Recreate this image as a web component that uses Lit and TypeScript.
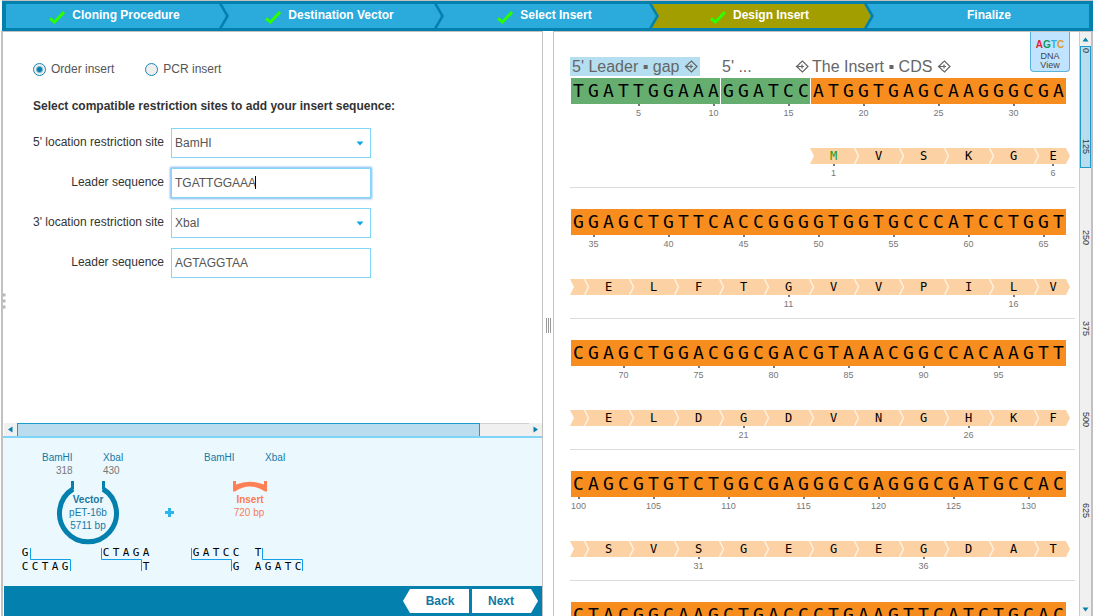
import { LitElement, html, svg, css, nothing } from "lit";
import { customElement, state } from "lit/decorators.js";
import { classMap } from "lit/directives/class-map.js";

interface Segment { kind: "leader" | "insert"; bases: string }
interface Codon { letter: string; span: number; start?: boolean }
interface SequenceRow { first: number; segments: Segment[]; offset: number; firstAmino: number; aminos: Codon[] }

const codons = (letters: string): Codon[] => [
  { letter: "", span: 1 },
  ...[...letters].map((letter, i) => ({ letter, span: i === letters.length - 1 ? 2 : 3 })),
];

const ROWS: SequenceRow[] = [
  {
    first: 1,
    segments: [
      { kind: "leader", bases: "TGATTGGAAA" },
      { kind: "leader", bases: "GGATCC" },
      { kind: "insert", bases: "ATGGTGAGCAAGGGCGA" },
    ],
    offset: 16,
    firstAmino: 1,
    aminos: [
      { letter: "M", span: 3, start: true },
      { letter: "V", span: 3 },
      { letter: "S", span: 3 },
      { letter: "K", span: 3 },
      { letter: "G", span: 3 },
      { letter: "E", span: 2 },
    ],
  },
  { first: 34, segments: [{ kind: "insert", bases: "GGAGCTGTTCACCGGGGTGGTGCCCATCCTGGT" }], offset: 0, firstAmino: 6, aminos: codons("ELFTGVVPILV") },
  { first: 67, segments: [{ kind: "insert", bases: "CGAGCTGGACGGCGACGTAAACGGCCACAAGTT" }], offset: 0, firstAmino: 17, aminos: codons("ELDGDVNGHKF") },
  { first: 100, segments: [{ kind: "insert", bases: "CAGCGTGTCTGGCGAGGGCGAGGGCGATGCCAC" }], offset: 0, firstAmino: 28, aminos: codons("SVSGEGEGDAT") },
  { first: 133, segments: [{ kind: "insert", bases: "CTACGGCAAGCTGACCCTGAAGTTCATCTGCAC" }], offset: 0, firstAmino: 39, aminos: codons("YGKLTLKFICT") },
];

const STEPS = [
  { label: "Cloning Procedure", done: true },
  { label: "Destination Vector", done: true },
  { label: "Select Insert", done: true },
  { label: "Design Insert", done: true, current: true },
  { label: "Finalize", done: false },
];

@customElement("wizard-steps")
export class WizardSteps extends LitElement {
  static styles = css`
    :host { display: block; }
    .steps {
      display: grid; grid-template-columns: repeat(5, 1fr); list-style: none; margin: 0;
      padding: 3px 12px 3px 4px; background: #0380ad; border-top: 1px solid #c4bfc1;
    }
    .step {
      position: relative; display: flex; align-items: center; justify-content: center; gap: 7px;
      height: 24px; padding-left: 2px; background: #2baadc; color: #fff; font-weight: bold; font-size: 12px; line-height: 14px;
    }
    .step:last-child { margin-right: -8px; padding-left: 0; }
    .current { background: #a39e00; }
    .label { padding-bottom: 2px; }
    .tick { width: 16px; height: 14px; margin-top: 2px; }
    .arrow { position: absolute; left: 100%; top: 0; z-index: 1; margin-left: -2px; width: 10px; height: 24px; }
    .arrow-fill { fill: #2baadc; }
    .current .arrow-fill { fill: #a39e00; }
  `;
  render() {
    return html`<ol class="steps">
      ${STEPS.map((s, i) => html`<li class=${classMap({ step: true, current: !!s.current })}>
        <svg class="tick" viewBox="0 0 16 14" aria-hidden="true">
          ${s.done ? svg`<path d="M1 8.5L5.5 12L15 2" fill="none" stroke="#2bff00" stroke-width="3"/>` : nothing}
        </svg>
        <span class="label">${s.label}</span>
        ${i < STEPS.length - 1 ? html`<svg class="arrow" viewBox="0 0 10 24" aria-hidden="true">
          <path class="arrow-fill" d="M0 0L7 12L0 24Z"/>
          <path d="M0 0H3L10 12L3 24H0L7 12Z" fill="#0380ad"/>
        </svg>` : nothing}
      </li>`)}
    </ol>`;
  }
}

@customElement("insert-form")
export class InsertForm extends LitElement {
  @state() private mode = "order";
  static styles = css`
    :host { display: block; }
    form { padding: 30px; font-size: 12px; line-height: 14px; color: #333; }
    .modes { display: flex; gap: 31px; border: 0; margin: 0; padding: 0; }
    .mode { display: flex; align-items: center; gap: 5px; color: #555; }
    .radio {
      appearance: none; width: 13px; height: 13px; margin: 0; border: 1px solid #1c87b4; border-radius: 50%;
      background: #eee;
    }
    .radio:checked { background: radial-gradient(circle, #0380ad 2px, #eee 4px); }
    .title { margin: 23px 0 15px; font-size: 12px; line-height: 14px; font-weight: bold; }
    .fields { display: grid; grid-template-columns: 131px 200px; column-gap: 7px; row-gap: 10px; }
    .name { text-align: right; padding-top: 7px; white-space: nowrap; }
    .control { position: relative; display: grid; }
    .field {
      box-sizing: border-box; width: 100%; height: 30px; margin: 0; padding: 0 3px; border: 1px solid #82d6f7;
      border-radius: 0; background: #fff; color: #555; font: inherit; appearance: none; outline: none;
    }
    .active { box-shadow: 0 0 2px 1px #7cb8f0; }
    .chevron { position: absolute; right: 7px; top: 13px; width: 8px; height: 5px; pointer-events: none; }
    .caret { position: absolute; left: 84px; top: 8px; width: 1px; height: 13px; background: #000; }
  `;
  render() {
    const arrow = html`<svg class="chevron" viewBox="0 0 8 5" aria-hidden="true"><path d="M0.5 0.5H7.5L4 4.5Z" fill="#12a5e5"/></svg>`;
    return html`<form>
      <fieldset class="modes" aria-label="Insert source">
        ${[["order", "Order insert"], ["pcr", "PCR insert"]].map(([id, label]) => html`<label class="mode">
          <input class="radio" type="radio" name="mode" .checked=${this.mode === id} @change=${() => (this.mode = id)}>${label}
        </label>`)}
      </fieldset>
      <h2 class="title">Select compatible restriction sites to add your insert sequence:</h2>
      <div class="fields">
        <label class="name" for="site5">5' location restriction site</label>
        <div class="control"><select class="field" id="site5"><option>BamHI</option><option>XbaI</option></select>${arrow}</div>
        <label class="name" for="lead5">Leader sequence</label>
        <div class="control"><input class="field active" id="lead5" value="TGATTGGAAA"><span class="caret"></span></div>
        <label class="name" for="site3">3' location restriction site</label>
        <div class="control"><select class="field" id="site3"><option>XbaI</option><option>BamHI</option></select>${arrow}</div>
        <label class="name" for="lead3">Leader sequence</label>
        <div class="control"><input class="field" id="lead3" value="AGTAGGTAA"></div>
      </div>
    </form>`;
  }
}

@customElement("cloning-diagram")
export class CloningDiagram extends LitElement {
  static styles = css`
    :host { display: block; height: 148px; background: #ebf9ff; border-top: 2px solid #7fd5f8; overflow: hidden; }
    .canvas { display: block; width: 540px; height: 148px; font-family: "Liberation Sans", Arial, sans-serif; font-size: 10px; }
    .site { fill: #1878a3; }
    .position { fill: #777; }
    .vector { fill: #1878a3; text-anchor: middle; }
    .insert { fill: #fc7b52; text-anchor: middle; }
    .strong { font-weight: bold; }
    .base { font-family: "DejaVu Sans Mono", monospace; font-size: 11px; text-anchor: middle; fill: #000; }
    .cut { fill: none; stroke: #109fe8; }
  `;
  private strand(bases: string, x: number, y: number) {
    return [...bases].map((b, i) => svg`<text class="base" x=${x + i * 10} y=${y}>${b}</text>`);
  }
  render() {
    return html`<svg class="canvas" viewBox="3 438 540 148" role="img" aria-label="Vector and insert with matching ends">
      <text class="site" x="42" y="461">BamHI</text>
      <text class="site" x="103" y="461">XbaI</text>
      <text class="position" x="56" y="474">318</text>
      <text class="position" x="103" y="474">430</text>
      <path d="M72.500 481V489.500M103.500 489.500V481" fill="none" stroke="#0380ad" stroke-width="3"/>
      <path d="M73 489A28.500 28.500 0 1 0 103 489" fill="none" stroke="#0380ad" stroke-width="5"/>
      <text class="vector strong" x="88" y="503">Vector</text>
      <text class="vector" x="88" y="516">pET-16b</text>
      <text class="vector" x="88" y="529">5711 bp</text>
      <path d="M168 508H171V511H174V514H171V517H168V514H165V511H168Z" fill="#2bb5ec"/>
      <text class="site" x="204" y="461">BamHI</text>
      <text class="site" x="265" y="461">XbaI</text>
      <path d="M233 481H236V484.500Q250 479 264 484.500V481H267V491.500H265Q250 481.500 235 491.500H233Z" fill="#ff8055"/>
      <text class="insert strong" x="250" y="503">Insert</text>
      <text class="insert" x="249" y="516">720 bp</text>
      ${this.strand("G", 25, 556)}${this.strand("CCTAG", 25, 570)}
      <path class="cut" d="M30.500 548V559.500H70.500V571"/>
      ${this.strand("CTAGA", 106, 556)}${this.strand("T", 146, 570)}
      <path class="cut" d="M101.500 548V559.500H141.500V571"/>
      ${this.strand("GATCC", 196, 556)}${this.strand("G", 236, 570)}
      <path class="cut" d="M191.500 548V559.500H231.500V571"/>
      ${this.strand("T", 258, 556)}${this.strand("AGATC", 258, 570)}
      <path class="cut" d="M262.500 548V559.500H302.500V571"/>
    </svg>`;
  }
}

@customElement("sequence-view")
export class SequenceView extends LitElement {
  static styles = css`
    :host { display: flex; flex-direction: column; overflow: hidden; }
    .rows { padding: 25px 4px 0 16px; }
    .row { border-bottom: 1px solid #dcdcdc; padding-left: 1px; }
    .track { display: grid; grid-template-columns: repeat(33, 15px); }
    .captions { height: 21px; font-size: 16px; line-height: 19px; color: #666; white-space: nowrap; }
    .caption { display: flex; align-items: center; gap: 5px; height: 19px; }
    .leader-caption { grid-column: span 10; justify-self: start; background: #b5dff0; margin-left: -1px; padding: 0 2px; }
    .site-caption { grid-column: span 6; justify-content: space-between; padding: 0 2px 0 1px; }
    .insert-caption { grid-column: span 17; padding-left: 1px; }
    .diamond { width: 14px; height: 13px; flex: none; }
    .segment { display: flex; height: 26px; box-sizing: border-box; }
    .leader { background: #65ae70; border-right: 1px solid #fff; }
    .insert { background: #f68d1e; }
    .base { width: 15px; text-align: center; font: 18px/26px "DejaVu Sans Mono", monospace; color: #000; flex: none; }
    .base-marks { height: 44px; }
    .amino-marks { height: 23px; }
    .mark { display: flex; flex-direction: column; align-items: center; width: 100%; font-size: 9px; line-height: 10px; color: #777; grid-row: 1; }
    .mark::before { content: ""; width: 2px; height: 2px; background: #777; margin-bottom: 2px; }
    .ribbon {
      display: grid; grid-template-columns: subgrid; background: #fcd1a3; height: 16px; margin: 0 -4px 0 -1px;
      padding: 0 4px 0 1px;
      clip-path: polygon(0 0, calc(100% - 4px) 0, 100% 50%, calc(100% - 4px) 100%, 0 100%, 4px 50%);
    }
    .amino { position: relative; text-align: center; font: 12px/16px "DejaVu Sans Mono", monospace; color: #000; }
    .last { padding-left: 4px; }
    .start { color: #1a9c1a; }
    .joint { position: absolute; left: -2px; top: 0; width: 6px; height: 16px; }
  `;

  private diamond() {
    return html`<svg class="diamond" viewBox="0 0 14 13" aria-hidden="true">
      <path d="M4 4L7.500 1L13 6.500L7.500 12L4 9M9 6.500H1.500M4.500 4L1.500 6.500L4.500 9M7 4.500V8.500" fill="none" stroke="#666" stroke-width="1.200"/>
    </svg>`;
  }

  private row(r: SequenceRow) {
    const marks = Array.from({ length: 33 }, (_, i) => r.first + i).filter((n) => n % 5 === 0);
    let column = r.offset + 1;
    const placed = r.aminos.map((a, i) => {
      const at = column;
      column += a.span;
      return { ...a, at, number: r.firstAmino + i };
    });
    return html`<section class="row">
      <div class="track captions">
        ${r.first === 1 ? html`
          <div class="caption leader-caption">5' Leader ▪ gap ${this.diamond()}</div>
          <div class="caption site-caption"><span>5' ...</span>${this.diamond()}</div>
          <div class="caption insert-caption">The Insert ▪ CDS ${this.diamond()}</div>` : nothing}
      </div>
      <div class="track">
        ${r.segments.map((s) => html`<div class="segment ${s.kind}" style="grid-column: span ${s.bases.length}">
          ${[...s.bases].map((b) => html`<span class="base">${b}</span>`)}
        </div>`)}
      </div>
      <div class="track base-marks">
        ${marks.map((n) => html`<span class="mark" style="grid-column: ${n - r.first + 1}">${n}</span>`)}
      </div>
      <div class="track">
        <div class="ribbon" style="grid-column: ${r.offset + 1} / 34">
          ${placed.map((a, i) => html`<span class=${classMap({ amino: true, start: !!a.start, last: a.span === 2 })} style="grid-column: span ${a.span}">
            ${i ? html`<svg class="joint" viewBox="0 0 6 16" aria-hidden="true"><path d="M0.500 0L4.500 8L0.500 16" fill="none" stroke="#fff0e0" stroke-width="1.500"/></svg>` : nothing}${a.letter}</span>`)}
        </div>
      </div>
      <div class="track amino-marks">
        ${placed.filter((a) => a.letter && a.number % 5 === 1).map((a) => html`<span
          class=${classMap({ mark: true, last: a.span === 2 })} style="grid-column: ${a.at} / span ${a.span}; box-sizing: border-box">${a.number}</span>`)}
      </div>
    </section>`;
  }
  render() {
    return html`<div class="rows">${ROWS.map((r) => this.row(r))}</div>`;
  }
}

@customElement("app-root")
export class AppRoot extends LitElement {
  static styles = css`
    :host { display: block; font-family: "Liberation Sans", Arial, sans-serif; background: #fff; }
    .page { display: flex; flex-direction: column; height: 100vh; overflow: hidden; }
    .header { flex: none; margin-left: 2px; }
    .body {
      position: relative; flex: 1; min-height: 0; display: grid; grid-template-columns: 1fr 10px 1fr;
      grid-template-rows: minmax(0, 1fr); margin-left: 1px; border-left: 2px solid #c4bfc1;
    }
    .grip { position: absolute; left: -2px; top: 262px; width: 5px; height: 16px; }
    .left { display: flex; flex-direction: column; min-width: 0; border-top: 1px solid #c4bfc1; border-right: 1px solid #c4bfc1; }
    .form { flex: 1; min-height: 0; overflow: hidden; }
    .hbar { display: flex; height: 13px; margin-left: 1px; background: #f0f0f0; flex: none; }
    .arrow-button {
      display: grid; place-items: center; width: 13px; height: 13px; padding: 0; border: 0; background: #f0f0f0; flex: none;
    }
    .arrow-icon { width: 7px; height: 7px; fill: #0380ad; }
    .thumb { background: #b9dcee; border: 1px solid #1b9ccb; box-sizing: border-box; }
    .hthumb { flex: 19; border-bottom: 0; }
    .hrest { flex: 2; border-top: 1px solid #d0d0d0; }
    .footer {
      flex: none; display: flex; justify-content: flex-end; gap: 3px; height: 30px; box-sizing: border-box;
      margin-left: 1px; padding: 3px 4px 3px 0; background: #0380ad;
    }
    .nav { width: 66px; height: 24px; padding: 0; border: 0; background: #fff; color: #0f78a3; font: bold 12px/24px "Liberation Sans", Arial, sans-serif; }
    .back { padding-left: 8px; clip-path: polygon(7px 0, 100% 0, 100% 100%, 7px 100%, 0 50%); }
    .next { padding-right: 8px; clip-path: polygon(0 0, calc(100% - 7px) 0, 100% 50%, calc(100% - 7px) 100%, 0 100%); }
    .splitter { display: grid; grid-template-columns: repeat(3, 1px); gap: 1px; justify-content: center; align-content: center; padding-top: 3px; }
    .line { height: 15px; background: #999; }
    .right {
      position: relative; display: grid; grid-template-columns: minmax(0, 1fr) 12px; min-width: 0; overflow: hidden;
      border: solid #c4bfc1; border-width: 1px 2px 0 1px;
    }
    .sequence { min-height: 0; }
    .view-tab {
      position: absolute; right: 21px; top: 0; width: 40px; height: 40px; box-sizing: border-box; padding: 3px 0 0;
      border: 1px solid #59b2dc; border-top: 0; border-radius: 0 0 4px 4px; background: #c0e3ff;
      font: 9px/9px "Liberation Sans", Arial, sans-serif; color: #444;
    }
    .letters { display: block; font-size: 10px; font-weight: bold; line-height: 15px; }
    .a { color: #ed1c35; } .g { color: #0b9a5a; } .t { color: #2db0e5; } .c { color: #dc9a31; }
    .vbar { display: flex; flex-direction: column; background: #f0f0f0; border-left: 1px solid #ccc; min-height: 0; }
    .vbar .arrow-button { width: 11px; height: 14px; }
    .scale { position: relative; flex: 1; min-height: 0; overflow: hidden; }
    .vthumb { position: absolute; left: 0; right: 0; top: 0; height: 122px; }
    .numbers { position: relative; padding-top: 2px; }
    .number { height: 91px; writing-mode: vertical-rl; font-size: 9px; line-height: 11px; color: #333; }
  `;
  private arrow(d: string) {
    return html`<svg class="arrow-icon" viewBox="0 0 7 7" aria-hidden="true"><path d=${d}/></svg>`;
  }
  render() {
    return html`<div class="page">
      <wizard-steps class="header"></wizard-steps>
      <main class="body">
        <svg class="grip" viewBox="0 0 5 16" fill="#bbb" aria-hidden="true"><circle cx="3" cy="2" r="1.800"/><circle cx="3" cy="8" r="1.800"/><circle cx="3" cy="14" r="1.800"/></svg>
        <div class="left">
          <insert-form class="form"></insert-form>
          <div class="hbar">
            <button class="arrow-button" aria-label="Scroll left">${this.arrow("M5.5 0.500V6.500L1 3.500Z")}</button>
            <div class="thumb hthumb"></div><div class="hrest"></div>
            <button class="arrow-button" aria-label="Scroll right">${this.arrow("M1.500 0.500V6.500L6 3.500Z")}</button>
          </div>
          <cloning-diagram></cloning-diagram>
          <div class="footer">
            <button class="nav back">Back</button><button class="nav next">Next</button>
          </div>
        </div>
        <div class="splitter"><span class="line"></span><span class="line"></span><span class="line"></span></div>
        <div class="right">
          <sequence-view class="sequence"></sequence-view>
          <div class="vbar">
            <button class="arrow-button" aria-label="Scroll up">${this.arrow("M0.500 5.500H6.500L3.500 1.500Z")}</button>
            <div class="scale">
              <div class="thumb vthumb"></div>
              <div class="numbers">${[0, 125, 250, 375, 500, 625].map((n) => html`<div class="number">${n}</div>`)}</div>
            </div>
            <button class="arrow-button" aria-label="Scroll down">${this.arrow("M0.500 1.500H6.500L3.500 5.500Z")}</button>
          </div>
          <button class="view-tab"><span class="letters"><span class="a">A</span><span class="g">G</span><span class="t">T</span><span class="c">C</span></span>DNA<br>View</button>
        </div>
      </main>
    </div>`;
  }
}
